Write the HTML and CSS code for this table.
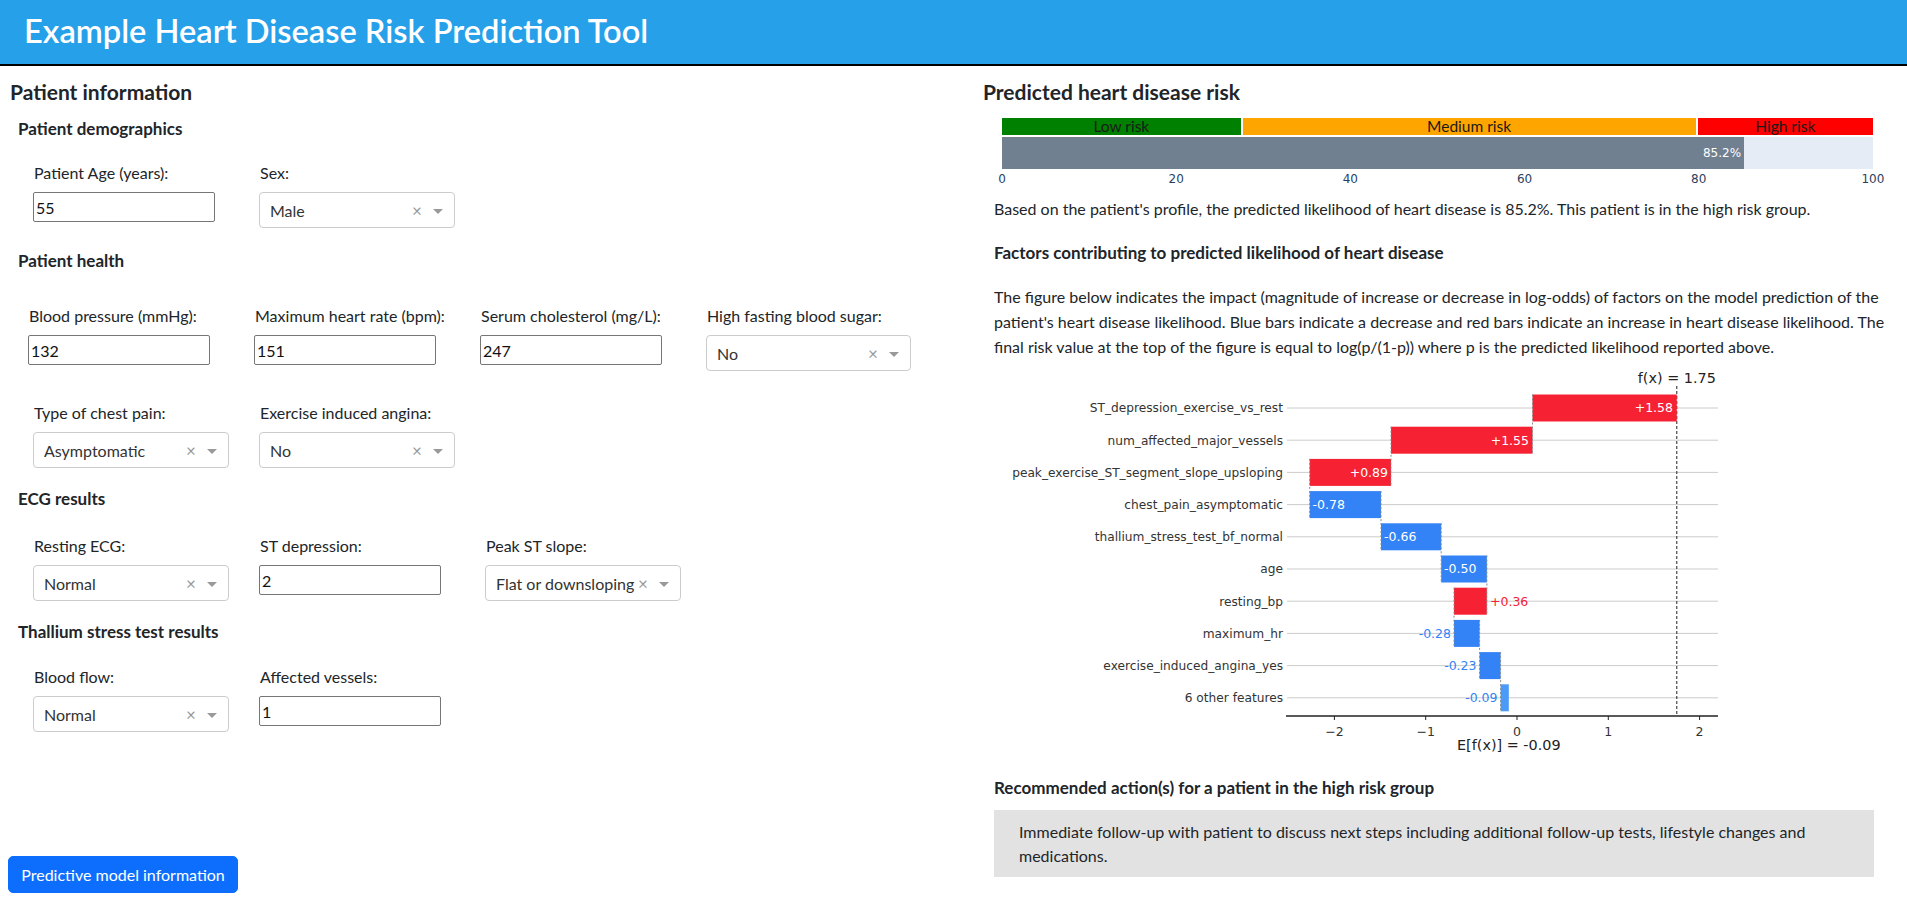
FILE: index.html
```html
<!DOCTYPE html>
<html lang="en">
<head>
<meta charset="utf-8">
<title>Example Heart Disease Risk Prediction Tool</title>
<link rel="stylesheet" href="styles.css">
</head>
<body>
<header class="topbar">
  <h1 class="app-title">Example Heart Disease Risk Prediction Tool</h1>
</header>
<main class="page">
  <section class="panel panel-left">
    <h2 class="panel-title">Patient information</h2>

    <h3 class="group-title gt-demo">Patient demographics</h3>
    <div class="field-row row-demo">
      <div class="field"><label class="field-label">Patient Age (years):</label><input class="num-input" type="text" value="55"></div>
      <div class="field"><label class="field-label">Sex:</label>
        <div class="select"><span class="select-value">Male</span><span class="select-clear">×</span><span class="select-arrow"></span></div></div>
    </div>

    <h3 class="group-title gt-health">Patient health</h3>
    <div class="field-row row-health1">
      <div class="field"><label class="field-label">Blood pressure (mmHg):</label><input class="num-input" type="text" value="132"></div>
      <div class="field"><label class="field-label">Maximum heart rate (bpm):</label><input class="num-input" type="text" value="151"></div>
      <div class="field"><label class="field-label">Serum cholesterol (mg/L):</label><input class="num-input" type="text" value="247"></div>
      <div class="field"><label class="field-label">High fasting blood sugar:</label>
        <div class="select select-wide"><span class="select-value">No</span><span class="select-clear">×</span><span class="select-arrow"></span></div></div>
    </div>
    <div class="field-row row-health2">
      <div class="field"><label class="field-label">Type of chest pain:</label>
        <div class="select"><span class="select-value">Asymptomatic</span><span class="select-clear">×</span><span class="select-arrow"></span></div></div>
      <div class="field"><label class="field-label">Exercise induced angina:</label>
        <div class="select"><span class="select-value">No</span><span class="select-clear">×</span><span class="select-arrow"></span></div></div>
    </div>

    <h3 class="group-title gt-ecg">ECG results</h3>
    <div class="field-row row-ecg">
      <div class="field"><label class="field-label">Resting ECG:</label>
        <div class="select"><span class="select-value">Normal</span><span class="select-clear">×</span><span class="select-arrow"></span></div></div>
      <div class="field"><label class="field-label">ST depression:</label><input class="num-input" type="text" value="2"></div>
      <div class="field"><label class="field-label">Peak ST slope:</label>
        <div class="select"><span class="select-value">Flat or downsloping</span><span class="select-clear">×</span><span class="select-arrow"></span></div></div>
    </div>

    <h3 class="group-title gt-thal">Thallium stress test results</h3>
    <div class="field-row row-thal">
      <div class="field"><label class="field-label">Blood flow:</label>
        <div class="select"><span class="select-value">Normal</span><span class="select-clear">×</span><span class="select-arrow"></span></div></div>
      <div class="field"><label class="field-label">Affected vessels:</label><input class="num-input" type="text" value="1"></div>
    </div>

    <button class="btn-primary" type="button">Predictive model information</button>
  </section>

  <section class="panel panel-right">
    <h2 class="panel-title">Predicted heart disease risk</h2>
    <div class="panel-body">
      <div class="risk-chart">
        <div class="risk-legend">
          <div class="risk-zone zone-low">Low risk</div>
          <div class="risk-zone zone-med">Medium risk</div>
          <div class="risk-zone zone-high">High risk</div>
        </div>
        <div class="risk-track">
          <div class="risk-fill" style="width:85.2%"><span class="risk-value">85.2%</span></div>
        </div>
        <div class="risk-ticks">
          <span class="tick">0</span><span class="tick">20</span><span class="tick">40</span><span class="tick">60</span><span class="tick">80</span><span class="tick">100</span>
        </div>
      </div>

      <p class="summary">Based on the patient's profile, the predicted likelihood of heart disease is 85.2%. This patient is in the high risk group.</p>

      <h3 class="sub-title st-factors">Factors contributing to predicted likelihood of heart disease</h3>
      <p class="explain">The figure below indicates the impact (magnitude of increase or decrease in log-odds) of factors on the model prediction of the patient's heart disease likelihood. Blue bars indicate a decrease and red bars indicate an increase in heart disease likelihood. The final risk value at the top of the figure is equal to log(p/(1-p)) where p is the predicted likelihood reported above.</p>

      <svg class="waterfall" width="900" height="395" viewBox="0 0 900 395" xmlns="http://www.w3.org/2000/svg">
        <g class="grid" stroke="#cccccc" stroke-width="1">
          <line x1="293" y1="44" x2="724" y2="44"/>
          <line x1="293" y1="76.2" x2="724" y2="76.2"/>
          <line x1="293" y1="108.4" x2="724" y2="108.4"/>
          <line x1="293" y1="140.6" x2="724" y2="140.6"/>
          <line x1="293" y1="172.8" x2="724" y2="172.8"/>
          <line x1="293" y1="205" x2="724" y2="205"/>
          <line x1="293" y1="237.2" x2="724" y2="237.2"/>
          <line x1="293" y1="269.4" x2="724" y2="269.4"/>
          <line x1="293" y1="301.6" x2="724" y2="301.6"/>
          <line x1="293" y1="333.8" x2="724" y2="333.8"/>
        </g>
        <line x1="682.8" y1="22" x2="682.8" y2="352" stroke="#222" stroke-width="1" stroke-dasharray="3 2"/>
        <g class="bars">
          <rect x="538.5" y="30.5" width="144.3" height="27" fill="#f62233"/>
          <rect x="397" y="62.7" width="141.5" height="27" fill="#f62233"/>
          <rect x="315.7" y="94.9" width="81.3" height="27" fill="#f62233"/>
          <rect x="315.7" y="127.1" width="71.3" height="27" fill="#3383f6"/>
          <rect x="387" y="159.3" width="60.2" height="27" fill="#3383f6"/>
          <rect x="447.2" y="191.5" width="45.7" height="27" fill="#3383f6"/>
          <rect x="460" y="223.7" width="32.9" height="27" fill="#f62233"/>
          <rect x="460" y="255.9" width="25.6" height="27" fill="#3383f6"/>
          <rect x="485.6" y="288.1" width="21" height="27" fill="#3383f6"/>
          <rect x="506.6" y="320.3" width="8.2" height="27" fill="#4a9af7"/>
        </g>
        <g class="edges" stroke="#8a8a8a" stroke-width="1" stroke-dasharray="2 2">
          <line x1="538.5" y1="30.5" x2="538.5" y2="89.7"/>
          <line x1="397" y1="62.7" x2="397" y2="121.9"/>
          <line x1="315.7" y1="94.9" x2="315.7" y2="154.1"/>
          <line x1="387" y1="127.1" x2="387" y2="186.3"/>
          <line x1="447.2" y1="159.3" x2="447.2" y2="218.5"/>
          <line x1="492.9" y1="191.5" x2="492.9" y2="250.7"/>
          <line x1="460" y1="223.7" x2="460" y2="282.9"/>
          <line x1="485.6" y1="255.9" x2="485.6" y2="315.1"/>
          <line x1="506.6" y1="288.1" x2="506.6" y2="347.3"/>
        </g>
        <g class="feature-labels" font-family="DejaVu Sans, Verdana, sans-serif" font-size="12.2" fill="#333" text-anchor="end">
          <text x="289" y="48.4">ST_depression_exercise_vs_rest</text>
          <text x="289" y="80.6">num_affected_major_vessels</text>
          <text x="289" y="112.8">peak_exercise_ST_segment_slope_upsloping</text>
          <text x="289" y="145">chest_pain_asymptomatic</text>
          <text x="289" y="177.2">thallium_stress_test_bf_normal</text>
          <text x="289" y="209.4">age</text>
          <text x="289" y="241.6">resting_bp</text>
          <text x="289" y="273.8">maximum_hr</text>
          <text x="289" y="306">exercise_induced_angina_yes</text>
          <text x="289" y="338.2">6 other features</text>
        </g>
        <g class="value-labels" font-family="DejaVu Sans, Verdana, sans-serif" font-size="12.5">
          <text x="679" y="48.4" fill="#fff" text-anchor="end">+1.58</text>
          <text x="535" y="80.6" fill="#fff" text-anchor="end">+1.55</text>
          <text x="394" y="112.8" fill="#fff" text-anchor="end">+0.89</text>
          <text x="318.5" y="145" fill="#fff">-0.78</text>
          <text x="390" y="177.2" fill="#fff">-0.66</text>
          <text x="450" y="209.4" fill="#fff">-0.50</text>
          <text x="496" y="241.6" fill="#f62233">+0.36</text>
          <text x="457" y="273.8" fill="#3383f6" text-anchor="end">-0.28</text>
          <text x="482.5" y="306" fill="#3383f6" text-anchor="end">-0.23</text>
          <text x="503.5" y="338.2" fill="#3383f6" text-anchor="end">-0.09</text>
        </g>
        <line x1="292" y1="352" x2="724" y2="352" stroke="#222" stroke-width="1.4"/>
        <g class="ticks" stroke="#222" stroke-width="1">
          <line x1="340.4" y1="352" x2="340.4" y2="356"/>
          <line x1="431.7" y1="352" x2="431.7" y2="356"/>
          <line x1="523" y1="352" x2="523" y2="356"/>
          <line x1="614.3" y1="352" x2="614.3" y2="356"/>
          <line x1="705.6" y1="352" x2="705.6" y2="356"/>
        </g>
        <g class="tick-labels" font-family="DejaVu Sans, Verdana, sans-serif" font-size="12.5" fill="#333" text-anchor="middle">
          <text x="340.4" y="372">−2</text>
          <text x="431.7" y="372">−1</text>
          <text x="523" y="372">0</text>
          <text x="614.3" y="372">1</text>
          <text x="705.6" y="372">2</text>
        </g>
        <text x="682.8" y="19" font-family="DejaVu Sans, Verdana, sans-serif" font-size="14.4" fill="#222" text-anchor="middle">f(x) = 1.75</text>
        <text x="514.8" y="386" font-family="DejaVu Sans, Verdana, sans-serif" font-size="14.4" fill="#222" text-anchor="middle">E[f(x)] = -0.09</text>
      </svg>

      <h3 class="sub-title st-reco">Recommended action(s) for a patient in the high risk group</h3>
      <div class="reco-box">Immediate follow-up with patient to discuss next steps including additional follow-up tests, lifestyle changes and medications.</div>
    </div>
  </section>
</main>
</body>
</html>
```

FILE: styles.css
```css
* { box-sizing: border-box; }

body {
  margin: 0;
  font-family: "Lato", "Liberation Sans", sans-serif;
  font-size: 16px;
  color: #212529;
  background: #fff;
}

/* header */
.topbar {
  height: 66px;
  background: #27a0ea;
  border-bottom: 2px solid #000;
  padding-left: 24px;
  display: flex;
  align-items: center;
}
.app-title {
  margin: 0 0 2px;
  color: #fff;
  font-size: 32.6px;
  font-weight: 600;
  line-height: 40px;
}

/* page */
.page {
  display: grid;
  grid-template-columns: 973px 1fr;
}
.panel { padding: 0 10px; }

.panel-title {
  margin: 14px 0 0;
  font-size: 21px;
  line-height: 24px;
  font-weight: 700;
}

/* left panel */
.group-title {
  margin: 0;
  padding-left: 8px;
  font-size: 17px;
  line-height: 20px;
  font-weight: 700;
}
.gt-demo { margin-top: 15px; }
.gt-health { margin-top: 23px; }
.gt-ecg { margin-top: 21px; }
.gt-thal { margin-top: 21px; }

.field-row {
  display: grid;
  grid-template-columns: repeat(4, 226px);
  align-items: start;
  padding-left: 23px;
}
.row-demo { margin-top: 24px; }
.row-health1 { margin-top: 35px; padding-left: 18px; }
.row-health2 { margin-top: 32px; }
.row-ecg { margin-top: 27px; }
.row-thal { margin-top: 25px; }

.field { display: flex; flex-direction: column; align-items: flex-start; }
.field-label {
  display: block;
  padding-left: 1px;
  margin-bottom: 9px;
  line-height: 20px;
  font-size: 16px;
  color: #212529;
}

.num-input {
  width: 182px;
  height: 30px;
  border: 1px solid #767676;
  border-radius: 2px;
  padding: 0 2px;
  font-family: "Lato", "Liberation Sans", sans-serif;
  font-size: 16px;
  color: #111;
  background: #fff;
}

.select {
  width: 196px;
  height: 36px;
  border: 1px solid #cccccc;
  border-radius: 4px;
  display: flex;
  align-items: center;
  padding-left: 10px;
  color: #333;
  font-size: 16px;
  background: #fff;
}
.select-wide { width: 205px; }
.select-value { flex: 1; white-space: nowrap; overflow: hidden; }
.select-clear {
  width: 14px;
  text-align: center;
  color: #999;
  font-size: 17px;
  line-height: 1;
}
.select-arrow {
  width: 0;
  height: 0;
  border-left: 5px solid transparent;
  border-right: 5px solid transparent;
  border-top: 5px solid #999;
  margin: 2px 11px 0 9px;
}

.btn-primary {
  display: block;
  margin: 124px 0 0 -2px;
  width: 230px;
  height: 37px;
  background: #0d6efd;
  color: #fff;
  border: 1px solid #0d6efd;
  border-radius: 5px;
  font-family: "Lato", "Liberation Sans", sans-serif;
  font-size: 16px;
}

/* right panel */
.panel-body { padding-left: 11px; }

.risk-chart {
  width: 871px;
  margin: 14px 0 0 8px;
}
.risk-legend {
  display: flex;
  height: 17px;
  gap: 2px;
}
.risk-zone {
  display: flex;
  align-items: center;
  justify-content: center;
  font-size: 15.5px;
  color: #1a1a1a;
  line-height: 17px;
}
.zone-low { width: 27.4%; background: #008000; }
.zone-med { width: 52%; background: #ffa500; }
.zone-high { flex: 1; background: #ff0000; }

.risk-track {
  margin-top: 2px;
  height: 32px;
  background: #e5ecf6;
}
.risk-fill {
  height: 100%;
  background: #708090;
  display: flex;
  align-items: center;
  justify-content: flex-end;
  padding-right: 3px;
}
.risk-value {
  color: #fff;
  font-family: "DejaVu Sans", Verdana, sans-serif;
  font-size: 12px;
}
.risk-ticks {
  margin-top: 3px;
  display: flex;
  justify-content: space-between;
  height: 14px;
}
.tick {
  width: 0;
  display: flex;
  justify-content: center;
  white-space: nowrap;
  font-family: "DejaVu Sans", Verdana, sans-serif;
  font-size: 12px;
  line-height: 14px;
  color: #2a3f5f;
}

.summary {
  margin: 11px 0 0;
  line-height: 24px;
}

.sub-title {
  margin: 0;
  font-size: 17px;
  line-height: 20px;
  font-weight: 700;
}
.st-factors { margin-top: 22px; }
.st-reco { margin-top: 19px; }

.explain {
  margin: 21px 0 0;
  line-height: 25px;
}

.waterfall {
  display: block;
  margin-top: 5px;
}

.reco-box {
  margin-top: 12px;
  width: 880px;
  background: #e2e2e2;
  padding: 10px 24px 9px 25px;
  line-height: 24px;
}
```
